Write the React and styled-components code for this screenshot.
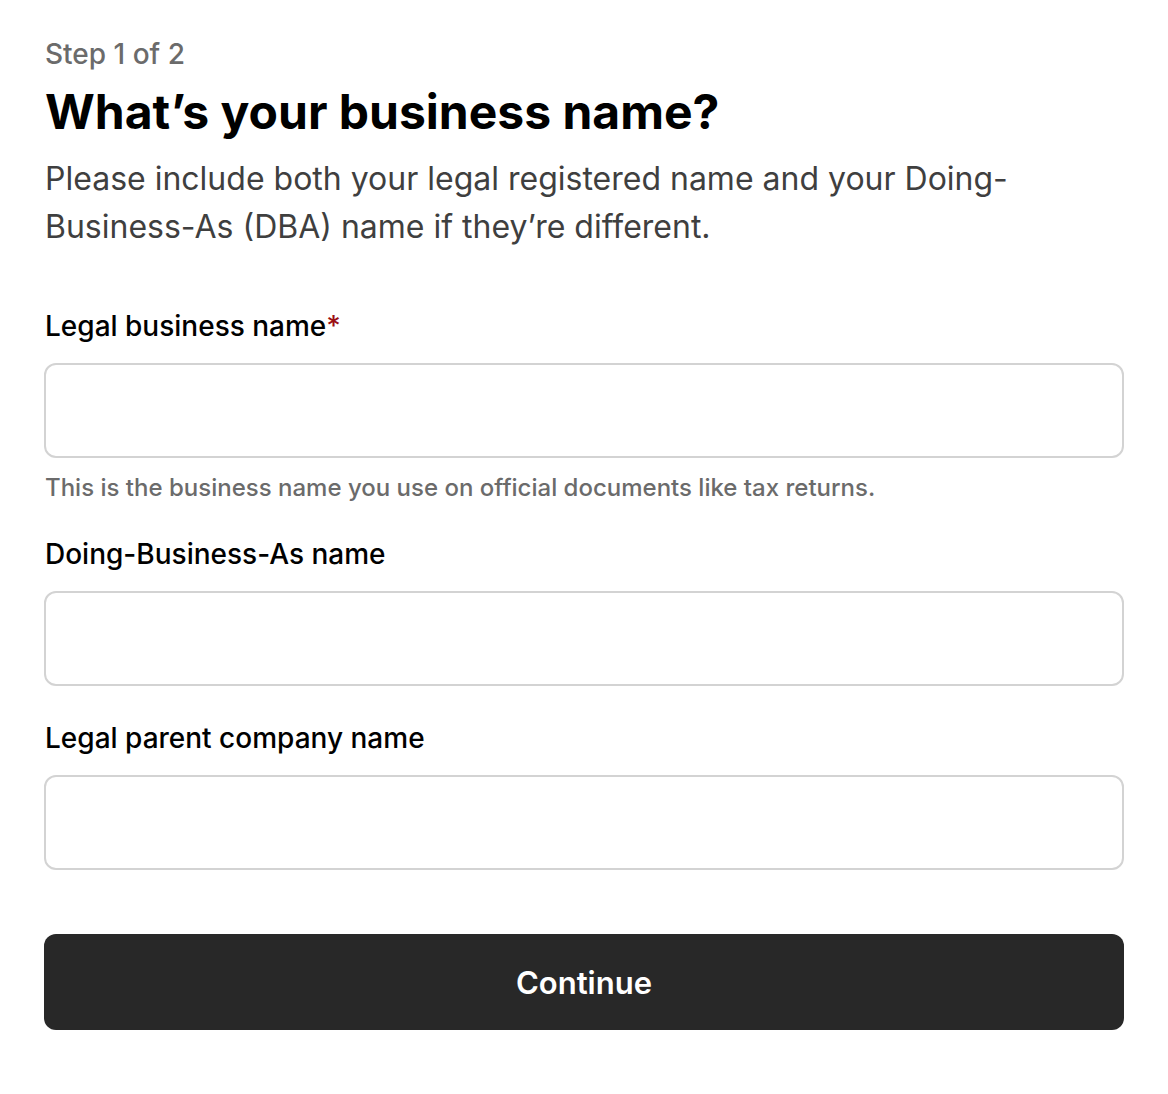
import React from "react";
import styled, { createGlobalStyle } from "styled-components";

const GlobalStyle = createGlobalStyle`
  body {
    margin: 0;
    background: #ffffff;
    font-family: Inter, "Liberation Sans", sans-serif;
    color: #000000;
  }
`;

const Page = styled.div`
  display: flex;
  flex-direction: column;
  padding: 38px 44px 40px 44px;
`;

const Step = styled.div`
  font-size: 28px;
  line-height: 32px;
  font-weight: 500;
  color: #6b6b6b;
  padding-left: 1px;
`;

const Title = styled.h1`
  margin: 13px 0 0 0;
  padding-left: 1px;
  font-size: 48px;
  line-height: 58px;
  font-weight: 700;
`;

const Intro = styled.p`
  margin: 14px 0 0 0;
  padding-left: 1px;
  font-size: 32px;
  line-height: 48px;
  color: #3f3f3f;
  max-width: 1000px;
`;

const Form = styled.form`
  display: flex;
  flex-direction: column;
  margin-top: 59px;
`;

const Field = styled.div`
  display: flex;
  flex-direction: column;
  margin-bottom: ${(p) => p.$gap || 37}px;
`;

const Label = styled.label`
  font-size: 28px;
  line-height: 32px;
  font-weight: 500;
  color: #000000;
  margin-bottom: 21px;
  padding-left: 1px;
`;

const Required = styled.span`
  color: #9b0f14;
`;

const Input = styled.input`
  box-sizing: border-box;
  height: 95px;
  width: 100%;
  border: 2px solid #d3d3d3;
  border-radius: 12px;
  background: #ffffff;
  font-family: inherit;
  font-size: 28px;
  padding: 0 24px;
  outline: none;
`;

const Help = styled.div`
  margin-top: 15px;
  padding-left: 1px;
  font-size: 24px;
  line-height: 30px;
  font-weight: 500;
  color: #6b6b6b;
`;

const Button = styled.button`
  margin-top: 28px;
  height: 96px;
  width: 100%;
  border: none;
  border-radius: 12px;
  background: #282828;
  color: #ffffff;
  font-family: inherit;
  font-size: 31px;
  font-weight: 600;
  cursor: pointer;
`;

export default function App() {
  return (
    <>
      <GlobalStyle />
      <Page>
        <Step>Step 1 of 2</Step>
        <Title>What’s your business name?</Title>
        <Intro>
          Please include both your legal registered name and your Doing-Business-As (DBA) name if they’re different.
        </Intro>
        <Form onSubmit={(e) => e.preventDefault()}>
          <Field $gap={35}>
            <Label>
              Legal business name<Required>*</Required>
            </Label>
            <Input type="text" />
            <Help>This is the business name you use on official documents like tax returns.</Help>
          </Field>
          <Field $gap={36}>
            <Label>Doing-Business-As name</Label>
            <Input type="text" />
          </Field>
          <Field $gap={36}>
            <Label>Legal parent company name</Label>
            <Input type="text" />
          </Field>
          <Button type="submit">Continue</Button>
        </Form>
      </Page>
    </>
  );
}
